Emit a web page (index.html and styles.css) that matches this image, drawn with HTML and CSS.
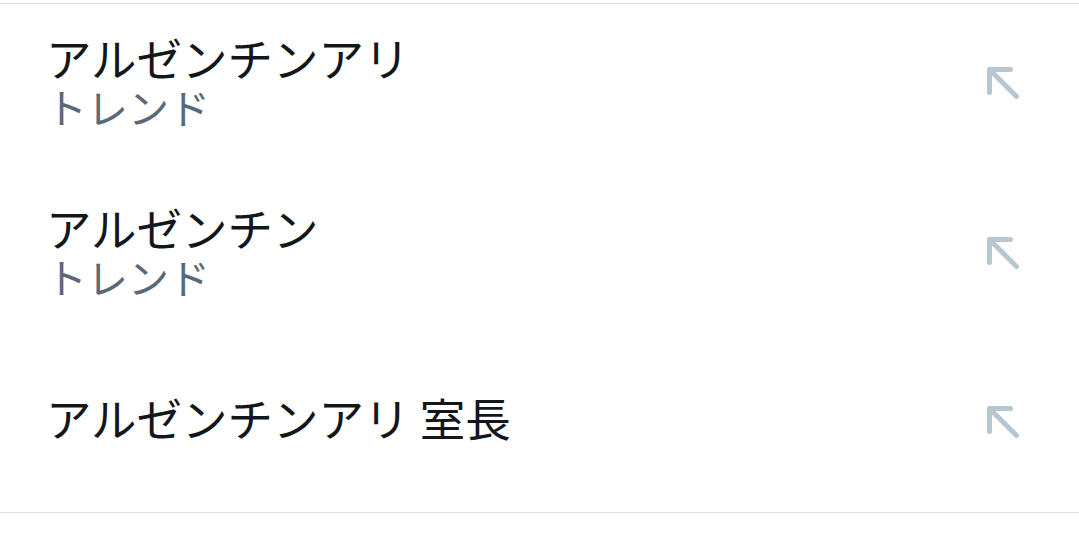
FILE: index.html
```html
<!DOCTYPE html>
<html lang="ja">
<head>
<meta charset="utf-8">
<link rel="stylesheet" href="styles.css">
</head>
<body>
<ul class="list">
  <li class="item">
    <div class="texts">
      <div class="title">アルゼンチンアリ</div>
      <div class="sub">トレンド</div>
    </div>
    <svg class="arrow" viewBox="0 0 40 40" width="40" height="40"><path d="M9.5 30.5 V7.5 H30.5 M9.5 7.5 L36.5 34.5" fill="none" stroke="#b6c7d0" stroke-width="5" stroke-linecap="round" stroke-linejoin="round"/></svg>
  </li>
  <li class="item">
    <div class="texts">
      <div class="title">アルゼンチン</div>
      <div class="sub">トレンド</div>
    </div>
    <svg class="arrow" viewBox="0 0 40 40" width="40" height="40"><path d="M9.5 30.5 V7.5 H30.5 M9.5 7.5 L36.5 34.5" fill="none" stroke="#b6c7d0" stroke-width="5" stroke-linecap="round" stroke-linejoin="round"/></svg>
  </li>
  <li class="item single">
    <div class="texts">
      <div class="title">アルゼンチンアリ 室長</div>
    </div>
    <svg class="arrow" viewBox="0 0 40 40" width="40" height="40"><path d="M9.5 30.5 V7.5 H30.5 M9.5 7.5 L36.5 34.5" fill="none" stroke="#b6c7d0" stroke-width="5" stroke-linecap="round" stroke-linejoin="round"/></svg>
  </li>
</ul>
</body>
</html>
```

FILE: styles.css
```css
html, body {
  margin: 0;
  padding: 0;
  background: #ffffff;
}
body {
  font-family: "Noto Sans CJK JP", "Noto Sans", sans-serif;
  padding-top: 3px;
}
.list {
  list-style: none;
  margin: 0;
  padding: 0;
  border-top: 1px solid #d9dee1;
  border-bottom: 1px solid #d9dee1;
}
.item {
  display: flex;
  align-items: center;
  justify-content: space-between;
  box-sizing: border-box;
  height: 170px;
  padding: 0 59px 0 46px;
}
.item.single {
  height: 168px;
}
.texts {
  display: flex;
  flex-direction: column;
  margin-bottom: 20px;
}
.single .texts {
  margin-bottom: 22px;
}
.title {
  font-size: 45.5px;
  line-height: 54px;
  color: #14171a;
}
.sub {
  font-size: 41px;
  line-height: 44px;
  color: #59697a;
}
.arrow {
  flex: none;
  margin-bottom: 14px;
}
```
